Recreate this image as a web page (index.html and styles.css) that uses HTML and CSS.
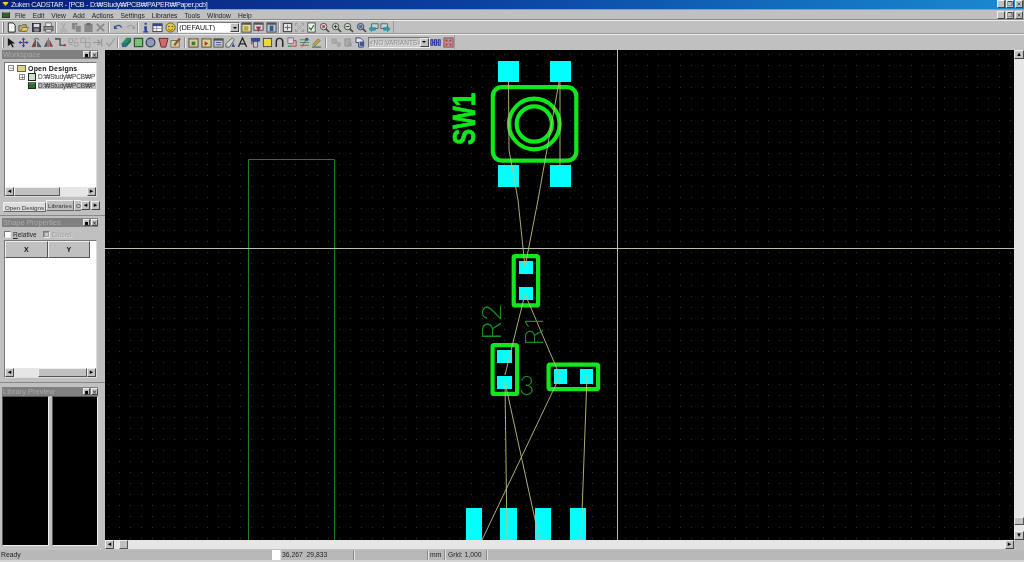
FILE: index.html
```html
<!DOCTYPE html>
<html lang="en">
<head>
<meta charset="utf-8">
<title>Zuken CADSTAR</title>
<link rel="stylesheet" href="styles.css">
</head>
<body>
<svg class="defs" aria-hidden="true">
  <symbol id="i-new" viewBox="0 0 12 12"><path d="M2.5 1h5l2.500 2.500V11h-7.500z" fill="#fff" stroke="#000"/></symbol>
  <symbol id="i-open" viewBox="0 0 12 12"><path d="M1 4h3l1-1h4v7H1z" fill="#c8b040" stroke="#444"/><path d="M3 10l2-4h6.500l-2 4z" fill="#e8d060" stroke="#444" stroke-width=".7"/></symbol>
  <symbol id="i-save" viewBox="0 0 12 12"><rect x="1.500" y="1.500" width="9" height="9" fill="#303060" stroke="#000" stroke-width=".8"/><rect x="3" y="2" width="6" height="3.500" fill="#ddd"/><rect x="3.500" y="7" width="5" height="3.500" fill="#888"/></symbol>
  <symbol id="i-print" viewBox="0 0 12 12"><rect x="3" y="1" width="6" height="4" fill="#eee" stroke="#444" stroke-width=".8"/><rect x="1" y="5" width="10" height="4.500" fill="#888" stroke="#333" stroke-width=".8"/><rect x="3" y="8" width="6" height="3" fill="#ddd" stroke="#444" stroke-width=".7"/></symbol>
  <symbol id="i-cut" viewBox="0 0 12 12"><path d="M4 1l3 7M8 1L5 8" stroke="#a0a0a0" fill="none"/><circle cx="4" cy="9.500" r="1.500" fill="none" stroke="#a0a0a0"/><circle cx="8" cy="9.500" r="1.500" fill="none" stroke="#a0a0a0"/></symbol>
  <symbol id="i-copy" viewBox="0 0 12 12"><rect x="1" y="1" width="6" height="7" fill="#808080"/><rect x="5" y="4" width="6" height="7" fill="#808080" stroke="#c0c0c0" stroke-width=".6"/></symbol>
  <symbol id="i-paste" viewBox="0 0 12 12"><rect x="1.500" y="2" width="9" height="9" fill="#808080"/><rect x="4" y="1" width="4" height="2.500" fill="#5a5a5a"/></symbol>
  <symbol id="i-del" viewBox="0 0 12 12"><path d="M2 2l8 8M10 2l-8 8" stroke="#808080" stroke-width="1.800"/></symbol>
  <symbol id="i-undo" viewBox="0 0 12 12"><path d="M2.500 5.500c2-2.500 5.500-2.500 7 .5" fill="none" stroke="#1a3c9c" stroke-width="1.600"/><path d="M1 3.500v4h4z" fill="#1a3c9c"/></symbol>
  <symbol id="i-redo" viewBox="0 0 12 12"><path d="M9.500 5.500c-2-2.500-5.500-2.500-7 .5" fill="none" stroke="#9a9a9a" stroke-width="1.400"/><path d="M11 3.500v4H7z" fill="#9a9a9a"/></symbol>
  <symbol id="i-info" viewBox="0 0 12 12"><rect x="5" y="1" width="2.400" height="2" fill="#1030a0"/><path d="M4.500 4.500h3V10H9v1.500H3.500V10h1.500z" fill="#1030a0"/></symbol>
  <symbol id="i-win" viewBox="0 0 12 12"><rect x="1" y="2" width="10" height="8.500" fill="#fff" stroke="#222"/><rect x="1" y="2" width="10" height="2.500" fill="#223a80"/><path d="M1 7h10M5 4.500v6" stroke="#555" stroke-width=".6"/></symbol>
  <symbol id="i-smile" viewBox="0 0 12 12"><circle cx="6" cy="6" r="5" fill="#e8d020" stroke="#444"/><circle cx="4.200" cy="4.800" r=".8" fill="#333"/><circle cx="7.800" cy="4.800" r=".8" fill="#333"/><path d="M3.500 7.500c1.500 2 3.500 2 5 0" stroke="#a02020" fill="none"/></symbol>
  <symbol id="i-a1" viewBox="0 0 12 12"><rect x="1" y="1" width="10" height="10" fill="#e8e0a0" stroke="#333"/><rect x="1" y="1" width="10" height="2" fill="#444"/><rect x="3" y="4.500" width="5" height="5" fill="#c0a030"/></symbol>
  <symbol id="i-a2" viewBox="0 0 12 12"><rect x="1" y="1" width="10" height="8" fill="#ddd" stroke="#333"/><rect x="1" y="1" width="10" height="2" fill="#444"/><path d="M3 5h6L6 11z" fill="#b02040"/></symbol>
  <symbol id="i-a3" viewBox="0 0 12 12"><rect x="1" y="1" width="10" height="10" fill="#b8c8d8" stroke="#333"/><rect x="1" y="1" width="10" height="2" fill="#444"/><rect x="4" y="4" width="4" height="6" fill="#204890"/></symbol>
  <symbol id="i-fit" viewBox="0 0 12 12"><rect x="1.500" y="1.500" width="9" height="9" fill="#e8e8e8" stroke="#333" stroke-width="1.200"/><path d="M6 3v6M3 6h6" stroke="#555"/></symbol>
  <symbol id="i-gfit" viewBox="0 0 12 12"><path d="M1.500 4V1.500H4M8 1.500h2.500V4M10.500 8v2.500H8M4 10.500H1.500V8" stroke="#8c8c8c" fill="none"/><path d="M3 3l6 6M9 3L3 9" stroke="#a0a0a0"/></symbol>
  <symbol id="i-chk" viewBox="0 0 12 12"><rect x="2" y="1" width="8" height="10" fill="#fff" stroke="#333"/><path d="M3.500 6l2 2.500 3-5" stroke="#108030" stroke-width="1.500" fill="none"/></symbol>
  <symbol id="i-zr" viewBox="0 0 12 12"><circle cx="5" cy="5" r="3.500" fill="#e8e0e0" stroke="#333"/><rect x="3.500" y="3.500" width="3" height="3" fill="#c03030"/><path d="M7.500 7.500l3.500 3.500" stroke="#333" stroke-width="1.600"/></symbol>
  <symbol id="i-zp" viewBox="0 0 12 12"><circle cx="5" cy="5" r="3.500" fill="#d8e8d8" stroke="#333"/><path d="M3 5h4M5 3v4" stroke="#111"/><path d="M7.500 7.500l3.500 3.500" stroke="#333" stroke-width="1.600"/></symbol>
  <symbol id="i-zm" viewBox="0 0 12 12"><circle cx="5" cy="5" r="3.500" fill="#d8e8d8" stroke="#333"/><path d="M3 5h4" stroke="#111"/><path d="M7.500 7.500l3.500 3.500" stroke="#333" stroke-width="1.600"/></symbol>
  <symbol id="i-zb" viewBox="0 0 12 12"><circle cx="5" cy="5" r="3.500" fill="#88a8c8" stroke="#333"/><rect x="3.500" y="3.500" width="3" height="3" fill="#406080"/><path d="M7.500 7.500l3.500 3.500" stroke="#333" stroke-width="1.600"/></symbol>
  <symbol id="i-pl" viewBox="0 0 12 12"><rect x="4" y="2" width="7" height="5" fill="#c0d8d8" stroke="#333" stroke-width=".8"/><path d="M1 7.500l3-3v1.500h4v3H4v1.500z" fill="#10a0b0" stroke="#086070" stroke-width=".5"/></symbol>
  <symbol id="i-pr" viewBox="0 0 12 12"><rect x="1" y="2" width="7" height="5" fill="#c0d8d8" stroke="#333" stroke-width=".8"/><path d="M11 7.500l-3-3v1.500H4v3h4v1.500z" fill="#10a0b0" stroke="#086070" stroke-width=".5"/></symbol>
  <symbol id="i-arrow" viewBox="0 0 12 12"><path d="M2 1l8 6H6.500L8.500 11 7 11.500 5 7.500 2 10z" fill="#000"/></symbol>
  <symbol id="i-move" viewBox="0 0 12 12"><path d="M6 1v10M1 6h10" stroke="#1030b0" stroke-width="1.200"/><path d="M6 .5l2 2.500H4zM6 11.500L4 9h4zM.5 6L3 4v4zM11.500 6L9 8V4z" fill="#1030b0"/><circle cx="6" cy="6" r="1.500" fill="#c03030"/></symbol>
  <symbol id="i-rot" viewBox="0 0 12 12"><path d="M1 10.500L5 3v7.500z" fill="#a02020" stroke="#222" stroke-width=".5"/><path d="M11 10.500L7 5v5.500z" fill="#206090" stroke="#222" stroke-width=".5"/><path d="M3 3c2-2 4-2 6 0" fill="none" stroke="#222" stroke-width=".7"/></symbol>
  <symbol id="i-mir" viewBox="0 0 12 12"><path d="M1 10.500L5 2.500v8z" fill="#444"/><path d="M11 10.500L7 2.500v8z" fill="#a02030"/><path d="M6 1v10" stroke="#222" stroke-width=".5"/></symbol>
  <symbol id="i-bend" viewBox="0 0 12 12"><path d="M1 2h4.500v7H11" fill="none" stroke="#222" stroke-width="1.200"/><rect x="0" y="1" width="2" height="2" fill="#2050a0"/><rect x="10" y="8" width="2" height="2" fill="#a02020"/></symbol>
  <symbol id="i-g1" viewBox="0 0 12 12"><path d="M1 2h4v4H1zM7 6h4v4H7zM1 8h4M7 2h4" fill="none" stroke="#989898"/><path d="M5 4h2v4" stroke="#a8a8a8" fill="none"/></symbol>
  <symbol id="i-g2" viewBox="0 0 12 12"><path d="M1 1h5v5H1zM6 6h5v5H6z" fill="none" stroke="#989898"/><path d="M8 1h3v3" stroke="#a8a8a8" fill="none"/></symbol>
  <symbol id="i-g3" viewBox="0 0 12 12"><path d="M1 6h8M6 3l3 3-3 3M10.500 2v8" stroke="#8c8c8c" fill="none" stroke-width="1.200"/></symbol>
  <symbol id="i-g4" viewBox="0 0 12 12"><path d="M1.500 6.500l3 3.500 6-8" stroke="#9a9a9a" fill="none" stroke-width="1.600"/></symbol>
  <symbol id="i-via" viewBox="0 0 12 12"><path d="M1 7l5-6h5L6 9H1z" fill="#128a5a" stroke="#083" stroke-width=".5"/><path d="M1 7h5v4H1z" fill="#1a5a8a"/><path d="M6 7l5-6v4l-5 6z" fill="#0c6040"/></symbol>
  <symbol id="i-sq" viewBox="0 0 12 12"><rect x="1.500" y="1.500" width="9" height="9" fill="#70c070" stroke="#1a4a1a" stroke-width="1.300"/></symbol>
  <symbol id="i-ci" viewBox="0 0 12 12"><circle cx="6" cy="6" r="4.700" fill="#8898b8" stroke="#222a50" stroke-width="1.300"/></symbol>
  <symbol id="i-fun" viewBox="0 0 12 12"><path d="M1 1.500h10L8.500 11h-5z" fill="#d06060" stroke="#501010"/></symbol>
  <symbol id="i-edit" viewBox="0 0 12 12"><rect x="1" y="4" width="9" height="7" fill="#e8d890" stroke="#444" stroke-width=".8"/><path d="M4 8l6-7 1.500 1.500-6 7z" fill="#a04020" stroke="#333" stroke-width=".4"/></symbol>
  <symbol id="i-c1" viewBox="0 0 12 12"><rect x="1" y="2" width="10" height="9" fill="#d8d088" stroke="#333"/><rect x="3.500" y=".8" width="5" height="2" fill="#888"/><rect x="4" y="5" width="4" height="4" fill="#2f6a2f"/></symbol>
  <symbol id="i-c2" viewBox="0 0 12 12"><rect x="1" y="2" width="10" height="9" fill="#e0d080" stroke="#333"/><rect x="3.500" y=".8" width="5" height="2" fill="#888"/><path d="M4 4.500v5l4-2.500z" fill="#a02020"/></symbol>
  <symbol id="i-c3" viewBox="0 0 12 12"><rect x="1" y="2" width="10" height="9" fill="#d0d0c0" stroke="#333"/><rect x="1" y="2" width="10" height="2" fill="#444"/><path d="M3 6h6M3 8.500h6" stroke="#2040a0"/></symbol>
  <symbol id="i-c4" viewBox="0 0 12 12"><path d="M1 11V7l7-6 2 2-5 8z" fill="#d8d8c8" stroke="#333" stroke-width=".8"/><path d="M9 6l2 5H7z" fill="#2a4a80"/></symbol>
  <symbol id="i-c5" viewBox="0 0 12 12"><path d="M1.500 11L6 1l4.500 10M3.500 7.500h5" fill="none" stroke="#111" stroke-width="1.400"/></symbol>
  <symbol id="i-c6" viewBox="0 0 12 12"><rect x="1" y="1" width="10" height="4" fill="#203a90"/><rect x="4" y="5" width="4" height="6" fill="#c8c8d8" stroke="#223" stroke-width=".7"/><rect x="1" y="5" width="2" height="3" fill="#d03030"/></symbol>
  <symbol id="i-c7" viewBox="0 0 12 12"><rect x="1.500" y="1.500" width="9" height="9" fill="#f0e020" stroke="#333"/></symbol>
  <symbol id="i-c8" viewBox="0 0 12 12"><path d="M2.500 11V5a3.500 3.500 0 0 1 7 0v6" fill="none" stroke="#111" stroke-width="1.600"/></symbol>
  <symbol id="i-c9" viewBox="0 0 12 12"><rect x="1" y="1" width="6" height="6" fill="#d8d8e8" stroke="#444" stroke-width=".7"/><path d="M7 4h3v6H4" stroke="#b03030" fill="none"/><path d="M1 10h3" stroke="#208030" stroke-width="1.400"/></symbol>
  <symbol id="i-c10" viewBox="0 0 12 12"><path d="M1 3h10M1 6h10M1 9h10" stroke="#309050" stroke-width="1.200"/><path d="M3 11l6-10" stroke="#b03030"/><rect x="7" y="1" width="3" height="3" fill="#2040a0"/></symbol>
  <symbol id="i-c11" viewBox="0 0 12 12"><path d="M2 8l6-6 2 2-6 6z" fill="#c8a030" stroke="#444" stroke-width=".6"/><path d="M1 11h10" stroke="#208040" stroke-width="1.400"/></symbol>
  <symbol id="i-v1" viewBox="0 0 12 12"><path d="M1 2h5v5H1zM7 6h3v4H7z" fill="#a8a8a8" stroke="#909090" stroke-width=".6"/></symbol>
  <symbol id="i-v2" viewBox="0 0 12 12"><path d="M2 2h6v8H2z" fill="#a8a8a8" stroke="#8c8c8c"/><path d="M6 6l4 4M10 6l-4 4" stroke="#808080"/></symbol>
  <symbol id="i-v3" viewBox="0 0 12 12"><path d="M1 1h5l3 3v7H4V6H1z" fill="#e8e8f0" stroke="#222a60"/><rect x="5" y="5" width="5" height="5" fill="#2a4a90"/></symbol>
  <symbol id="i-v4" viewBox="0 0 12 12"><path d="M1 3v6h2V3zM5 3h2v6H5zM9 3h2v6H9z" fill="none" stroke="#1020a0" stroke-width="1.300"/><path d="M3 6h2M7 6h2" stroke="#1020a0"/></symbol>
  <symbol id="i-v5" viewBox="0 0 12 12"><rect x="1" y="1" width="10" height="10" fill="#d88080" stroke="#704040"/><path d="M3 9l6-6M3 3l6 6" stroke="#a02030" stroke-width="1.300"/><circle cx="6" cy="6" r="2" fill="#8090c0"/></symbol>
</svg>

<div class="app">
  <header class="titlebar">
    <span class="appicon"></span>
    <span class="titletext">Zuken CADSTAR - [PCB - D:₩Study₩PCB₩PAPER₩Paper.pcb]</span>
    <span class="winbtns">
      <span class="wbtn">_</span><span class="wbtn">❐</span><span class="wbtn">×</span>
    </span>
  </header>

  <nav class="menubar">
    <span class="docicon"></span>
    <span class="mi"><u>F</u>ile</span><span class="mi"><u>E</u>dit</span><span class="mi"><u>V</u>iew</span><span class="mi"><u>A</u>dd</span><span class="mi">A<u>c</u>tions</span><span class="mi"><u>S</u>ettings</span><span class="mi"><u>L</u>ibraries</span><span class="mi"><u>T</u>ools</span><span class="mi"><u>W</u>indow</span><span class="mi"><u>H</u>elp</span>
    <span class="winbtns">
      <span class="wbtn">_</span><span class="wbtn">❐</span><span class="wbtn">×</span>
    </span>
  </nav>

  <div class="toolrow row1">
    <div class="toolbar tb-a">
      <span class="grip"></span>
      <span class="tb"><svg><use href="#i-new"/></svg></span><span class="tb"><svg><use href="#i-open"/></svg></span><span class="tb"><svg><use href="#i-save"/></svg></span><span class="tb"><svg><use href="#i-print"/></svg></span>
      <span class="sep s3"></span>
      <span class="tb"><svg><use href="#i-cut"/></svg></span><span class="tb"><svg><use href="#i-copy"/></svg></span><span class="tb"><svg><use href="#i-paste"/></svg></span><span class="tb"><svg><use href="#i-del"/></svg></span>
      <span class="sep"></span>
      <span class="tb"><svg><use href="#i-undo"/></svg></span><span class="tb"><svg><use href="#i-redo"/></svg></span>
      <span class="sep s3"></span>
      <span class="tb"><svg><use href="#i-info"/></svg></span><span class="tb"><svg><use href="#i-win"/></svg></span><span class="tb"><svg><use href="#i-smile"/></svg></span>
      <span class="combo c-default"><span class="combotext">(DEFAULT)</span><span class="comboarrow"></span></span>
      <span class="tb"><svg><use href="#i-a1"/></svg></span><span class="tb"><svg><use href="#i-a2"/></svg></span><span class="tb"><svg><use href="#i-a3"/></svg></span>
      <span class="sep s4"></span>
      <span class="tb"><svg><use href="#i-fit"/></svg></span><span class="tb"><svg><use href="#i-gfit"/></svg></span><span class="tb"><svg><use href="#i-chk"/></svg></span><span class="tb"><svg><use href="#i-zr"/></svg></span><span class="tb"><svg><use href="#i-zp"/></svg></span><span class="tb"><svg><use href="#i-zm"/></svg></span><span class="tb"><svg><use href="#i-zb"/></svg></span><span class="tb"><svg><use href="#i-pl"/></svg></span><span class="tb"><svg><use href="#i-pr"/></svg></span>
    </div>
  </div>

  <div class="toolrow row2">
    <div class="toolbar tb-b">
      <span class="grip"></span>
      <span class="tb"><svg><use href="#i-arrow"/></svg></span><span class="tb"><svg><use href="#i-move"/></svg></span><span class="tb"><svg><use href="#i-rot"/></svg></span><span class="tb"><svg><use href="#i-mir"/></svg></span><span class="tb"><svg><use href="#i-bend"/></svg></span><span class="tb"><svg><use href="#i-g1"/></svg></span><span class="tb"><svg><use href="#i-g2"/></svg></span><span class="tb"><svg><use href="#i-g3"/></svg></span><span class="tb"><svg><use href="#i-g4"/></svg></span>
      <span class="sep s4"></span>
      <span class="tb"><svg><use href="#i-via"/></svg></span><span class="tb"><svg><use href="#i-sq"/></svg></span><span class="tb"><svg><use href="#i-ci"/></svg></span><span class="tb"><svg><use href="#i-fun"/></svg></span><span class="tb"><svg><use href="#i-edit"/></svg></span>
      <span class="sep s6"></span>
      <span class="tb"><svg><use href="#i-c1"/></svg></span><span class="tb"><svg><use href="#i-c2"/></svg></span><span class="tb"><svg><use href="#i-c3"/></svg></span><span class="tb"><svg><use href="#i-c4"/></svg></span><span class="tb"><svg><use href="#i-c5"/></svg></span><span class="tb"><svg><use href="#i-c6"/></svg></span><span class="tb"><svg><use href="#i-c7"/></svg></span><span class="tb"><svg><use href="#i-c8"/></svg></span><span class="tb"><svg><use href="#i-c9"/></svg></span><span class="tb"><svg><use href="#i-c10"/></svg></span><span class="tb"><svg><use href="#i-c11"/></svg></span>
      <span class="sep s7"></span>
      <span class="tb"><svg><use href="#i-v1"/></svg></span><span class="tb"><svg><use href="#i-v2"/></svg></span><span class="tb"><svg><use href="#i-v3"/></svg></span>
      <span class="combo c-variants"><span class="combotext dim">&lt;NO VARIANTS&gt;</span><span class="comboarrow"></span></span>
      <span class="tb"><svg><use href="#i-v4"/></svg></span><span class="tb"><svg><use href="#i-v5"/></svg></span>
    </div>
  </div>

  <main class="main">
    <aside class="side">
      <section class="dock dock-ws">
        <div class="caption"><span>Workspace</span><span class="capbtns"><i>▪</i><i>×</i></span></div>
        <div class="treebox">
          <ul class="tree">
            <li class="root"><span class="expander">−</span><span class="folder"></span><b>Open Designs</b></li>
            <li class="lvl"><span class="expander">+</span><span class="fileicon"></span><span>D:₩Study₩PCB₩P</span></li>
            <li class="lvl sel"><span class="noexp"></span><span class="pcbicon"></span><span class="seltext">D:₩Study₩PCB₩P</span></li>
          </ul>
          <div class="hscroll small">
            <span class="sbtn">◂</span><span class="thumb t-ws"></span><span class="track"></span><span class="sbtn">▸</span>
          </div>
        </div>
        <div class="tabs">
          <span class="tab active">Open Designs</span><span class="tab t-lib">Libraries</span><span class="tab cut">O</span><span class="tabnav"><span class="sbtn">◂</span><span class="sbtn">▸</span></span>
        </div>
      </section>

      <section class="dock dock-shape">
        <div class="caption"><span>Shape Properties</span><span class="capbtns"><i>▪</i><i>×</i></span></div>
        <div class="checks">
          <span class="cb"></span><span class="cblabel"><u>R</u>elative</span>
          <span class="cb checked"></span><span class="cblabel dimlabel">Closed</span>
        </div>
        <div class="gridbox">
          <div class="gridhead"><span class="gh">X</span><span class="gh">Y</span></div>
          <div class="gridbody"></div>
          <div class="hscroll small">
            <span class="sbtn">◂</span><span class="track"></span><span class="thumb t-grid"></span><span class="sbtn">▸</span>
          </div>
        </div>
      </section>

      <section class="dock dock-lib">
        <div class="caption"><span>Library Preview</span><span class="capbtns"><i>▪</i><i>×</i></span></div>
        <div class="previews"><div class="pv"></div><div class="pv"></div></div>
      </section>
    </aside>

    <div class="workarea">
      <div class="viewrow">
        <svg class="board" viewBox="105 50 909 490" preserveAspectRatio="none" role="img" aria-label="PCB layout">
          <defs>
            <pattern id="dots" x="108" y="54" width="11" height="11" patternUnits="userSpaceOnUse">
              <rect x="0" y="0" width="1" height="1" fill="#343434"/>
            </pattern>
          </defs>
          <rect x="105" y="50" width="909" height="490" fill="#000"/>
          <rect x="105" y="50" width="909" height="490" fill="url(#dots)"/>

          <path class="outline" d="M248.500 541V159.500H334.500V541"/>
          <path class="cross" d="M105 248.500H1014M617.500 50V540"/>

          <g class="pad">
            <rect x="498" y="61" width="21" height="21"/><rect x="550" y="61" width="21" height="21"/>
            <rect x="498" y="165" width="21" height="22"/><rect x="550" y="165" width="21" height="22"/>
            <rect x="519" y="261" width="14" height="13"/><rect x="519" y="287" width="14" height="13"/>
            <rect x="497" y="350" width="15" height="13"/><rect x="497" y="376" width="15" height="13"/>
            <rect x="554" y="369" width="13" height="15"/><rect x="580" y="369" width="13" height="15"/>
            <rect x="466" y="508" width="16" height="32"/><rect x="500" y="508" width="17" height="32"/>
            <rect x="535" y="508" width="16" height="32"/><rect x="570" y="508" width="16" height="32"/>
          </g>

          <g class="silk">
            <rect x="492.800" y="87.100" width="83.500" height="73.500" rx="9"/>
            <circle cx="534.300" cy="124" r="25.300"/>
            <circle cx="534.300" cy="124" r="17.600"/>
            <rect x="513.700" y="256.200" width="24.400" height="49.200" rx="1.500"/>
            <rect x="492.600" y="345.200" width="24.500" height="48.700" rx="1.500"/>
            <rect x="548.600" y="364.600" width="49.500" height="24.500" rx="1.500"/>
          </g>

          <g class="rats">
            <path d="M508.500 82L509 150L518 200L525 267"/>
            <path d="M560 82V165"/>
            <path d="M559 82L538 200L525 267"/>
            <path d="M525 294L505 375"/>
            <path d="M525 294L560 376"/>
            <path d="M560 376L482 540"/>
            <path d="M505 382L507 540"/>
            <path d="M505 382L539.500 540"/>
            <path d="M587 376L581 540"/>
          </g>

          <text class="swlabel" transform="translate(475 145) rotate(-90)" textLength="52" lengthAdjust="spacingAndGlyphs">SW1</text>
          <text class="reflabel" transform="translate(501 340) rotate(-90)" textLength="37" lengthAdjust="spacingAndGlyphs">R2</text>
          <text class="reflabel r1" transform="translate(543 346) rotate(-90)" textLength="28" lengthAdjust="spacingAndGlyphs">R1</text>
          <text class="reflabel" x="519" y="395">3</text>
        </svg>
        <div class="vscroll">
          <span class="sbtn">▴</span><span class="vtrack"></span><span class="vthumb"></span><span class="vtrack2"></span><span class="sbtn">▾</span>
        </div>
      </div>
      <div class="hrow">
        <div class="hscroll big">
          <span class="sbtn">◂</span><span class="track t-left"></span><span class="thumb t-main"></span><span class="track"></span><span class="sbtn">▸</span>
        </div>
        <span class="corner"></span>
      </div>
    </div>
  </main>

  <footer class="status">
    <span class="st st-ready">Ready</span>
    <span class="st-white"></span>
    <span class="st st-coord">36,267&nbsp; 29,833</span>
    <span class="st st-empty"></span>
    <span class="st st-unit">mm</span>
    <span class="st st-grid">Grid: 1,000</span>
    <span class="st st-rest"></span>
  </footer>
</div>
</body>
</html>
```

FILE: styles.css
```css
* { box-sizing: border-box; }
html, body { margin: 0; padding: 0; background: #c0c0c0; overflow: hidden; }
.defs { position: absolute; width: 0; height: 0; }

.app {
  width: 1024px;
  height: 562px;
  display: flex;
  flex-direction: column;
  background: #c0c0c0;
  font: 7px "Liberation Sans", "Noto Sans CJK KR", Arial, sans-serif;
  color: #111;
  overflow: hidden;
  filter: blur(0.4px);
}

/* Title bar */
.titlebar {
  height: 10px;
  flex: none;
  display: flex;
  align-items: center;
  padding: 0 1px 1px 2px;
  background: linear-gradient(90deg, #0a1f78 0%, #0a3fa0 45%, #1478c4 85%, #1c8ad0 100%);
  border-bottom: 1px solid #7fa0d0;
  color: #e8e8f4;
  font-size: 7.2px;
}
.appicon {
  width: 7px; height: 5px; margin-right: 2px;
  background: linear-gradient(#f0d020, #f0d020 40%, #505010);
  clip-path: polygon(0 0, 100% 0, 50% 100%);
}
.titletext { letter-spacing: -0.28px; white-space: nowrap; }
.winbtns { margin-left: auto; display: flex; gap: 1px; }
.wbtn {
  width: 8px; height: 8px;
  background: #c0c0c0;
  border: 1px solid;
  border-color: #eee #444 #444 #eee;
  font: 6px/6px "DejaVu Sans", sans-serif;
  text-align: center;
  color: #111;
  overflow: hidden;
}

/* Menu bar */
.menubar {
  height: 10px;
  flex: none;
  display: flex;
  align-items: center;
  padding: 0 1px 0 2px;
  font-size: 6.700px;
}
.docicon {
  width: 8px; height: 6px;
  margin-right: 5px;
  background: #2a6a20;
  border: 1px solid #333;
  border-top-color: #888;
}
.mi { margin-right: 7px; white-space: nowrap; color: #222; }
.mi u { text-decoration-thickness: 1px; }

/* Tool rows */
.toolrow { flex: none; display: flex; }
.row1 { height: 14px; border-top: 1px solid #eee; box-shadow: 0 -1px 0 #8c8c8c; }
.row2 { height: 16px; border-top: 1px solid #eee; box-shadow: 0 -1px 0 #999; }
.toolbar {
  height: 14px;
  display: flex;
  align-items: center;
  padding-left: 2px;
  border-right: 1px solid #999;
}
.tb-a { width: 394px; height: 13px; }
.tb-b { width: 455px; }
.grip {
  width: 2px; height: 11px;
  margin-right: 1.500px;
  border-left: 1px solid #f2f2f2;
  border-right: 1px solid #777;
}
.tb { width: 12.300px; height: 12px; flex: none; display: flex; align-items: center; justify-content: center; }
.tb svg { width: 11px; height: 11px; display: block; opacity: .88; }
.sep {
  width: 5px; height: 11px; flex: none;
  background: linear-gradient(90deg, #8c8c8c 50%, #eee 50%) center / 2px 100% no-repeat;
}
.s3 { width: 3px; }
.s4 { width: 4px; }
.s6 { width: 6px; }
.s7 { width: 7px; }
.combo {
  height: 11px;
  flex: none;
  display: flex;
  align-items: center;
  background: #fff;
  border: 1px solid;
  border-color: #777 #eee #eee #777;
  padding-left: 1px;
}
.c-default { width: 63px; margin-left: 1px; }
.c-variants { width: 62px; margin-left: 1px; background: #c4c4c4; }
.combotext { flex: 1; white-space: nowrap; overflow: hidden; }
.combotext.dim { color: #8a8a8a; text-shadow: 1px 1px 0 #eee; font-size: 6.5px; }
.comboarrow {
  width: 9px; height: 9px;
  flex: none;
  background: #c0c0c0;
  border: 1px solid;
  border-color: #eee #444 #444 #eee;
  position: relative;
}
.comboarrow::after {
  content: "";
  position: absolute;
  left: 1.500px; top: 2.500px;
  border: 2px solid transparent;
  border-top: 2px solid #000;
  border-bottom: 0;
}

/* Main */
.main { flex: 1; display: flex; min-height: 0; }
.side { width: 105px; flex: none; display: flex; flex-direction: column; }
.dock { border-bottom: 1px solid #888; padding: 0 2px; display: flex; flex-direction: column; }
.dock-ws { height: 166px; }
.dock-shape { height: 167px; padding-top: 2px; }
.dock-lib { flex: 1; padding-top: 4px; border-bottom: 0; }
.caption {
  height: 9px;
  flex: none;
  background: #808080;
  color: #aaa;
  display: flex;
  align-items: center;
  padding-left: 1px;
  margin-right: 5px;
  font-size: 7.5px;
}
.capbtns { margin-left: auto; display: flex; gap: 1px; }
.capbtns i {
  width: 7px; height: 7px;
  background: #c0c0c0;
  border: 1px solid;
  border-color: #eee #444 #444 #eee;
  font: normal 6px/5px "DejaVu Sans", sans-serif;
  color: #000;
  text-align: center;
  overflow: hidden;
}
.treebox {
  height: 135px;
  margin: 3px 6px 0 2px;
  background: #fff;
  border: 1px solid;
  border-color: #777 #ddd #ddd #777;
  display: flex;
  flex-direction: column;
}
.tree { list-style: none; margin: 0; padding: 1px 0 0 3px; flex: 1; font-size: 6.500px; letter-spacing: -.15px; color: #333; overflow: hidden; }
.tree li { height: 8.500px; display: flex; align-items: center; white-space: nowrap; }
.tree b { color: #111; font-weight: 700; letter-spacing: .2px; font-size: 7px; }
.lvl { padding-left: 11px; }
.expander {
  width: 6px; height: 6px; flex: none;
  border: 1px solid #888;
  font: 6px/4px "DejaVu Sans", sans-serif;
  text-align: center;
  margin-right: 3px;
  overflow: hidden;
}
.noexp { width: 9px; flex: none; }
.folder { width: 9px; height: 7px; background: #e0d080; border: 1px solid #665; margin-right: 2px; flex: none; }
.fileicon { width: 8px; height: 8px; background: #cfe0cf; border: 1px solid #222; margin-right: 2px; flex: none; }
.pcbicon { width: 8px; height: 7px; background: #1f7a1f; border: 1px solid #222; border-top: 2px solid #666; margin-right: 2px; flex: none; }
.seltext { background: #c0c0c0; flex: 1; }

.hscroll { display: flex; align-items: stretch; flex: none; }
.hscroll.small { height: 9px; }
.hscroll.big { height: 9px; flex: 1; }
.sbtn {
  width: 9px; height: 9px; flex: none;
  background: #c0c0c0;
  border: 1px solid;
  border-color: #eee #444 #444 #eee;
  font: 7px/6px "DejaVu Sans", sans-serif;
  text-align: center;
  color: #000;
  overflow: hidden;
}
.track { flex: 1; background: #e6e6e6; }
.thumb { flex: none; background: #c0c0c0; border: 1px solid; border-color: #eee #555 #555 #eee; }
.t-ws { width: 46px; }
.t-grid { width: 49px; }
.t-main { width: 9px; }
.t-left { flex: none; width: 5px; }

.tabs { display: flex; align-items: flex-end; height: 14px; padding-left: 1px; margin-right: 4px; font-size: 6.200px; color: #333; }
.tab {
  height: 11px; padding: 0 1px;
  border: 1px solid #666;
  border-top-color: #eee;
  border-left-color: #eee;
  white-space: nowrap;
  line-height: 9px;
  flex: none;
}
.tab.active { background: #ddd; height: 10px; width: 43px; margin-bottom: -1px; padding: 0; text-align: center; }
.t-lib { width: 28px; }
.tab.cut { width: 7px; border-right: 0; }
.tabnav { display: flex; margin-left: auto; gap: 1px; padding-bottom: 1px; }

.checks { height: 12px; flex: none; display: flex; align-items: center; padding-left: 2px; margin-top: 1px; }
.cb { width: 7px; height: 7px; background: #fff; border: 1px solid; border-color: #777 #eee #eee #777; margin-right: 2px; flex: none; }
.cb.checked { background: #c8c8c8; box-shadow: inset 0 0 0 1px #999; }
.cblabel { margin-right: 6px; color: #222; font-size: 6.500px; white-space: nowrap; }
.dimlabel { color: #a0a0a0; text-shadow: 1px 1px 0 #ddd; }

.gridbox {
  height: 138px;
  margin: 0 6px 0 2px;
  background: #fff;
  border: 1px solid;
  border-color: #777 #ddd #ddd #777;
  display: flex;
  flex-direction: column;
}
.gridhead { display: flex; height: 17px; flex: none; width: 85px; }
.gh {
  flex: 1;
  background: #c0c0c0;
  border: 1px solid;
  border-color: #eee #555 #555 #eee;
  text-align: center;
  line-height: 15px;
  font-weight: 700;
  font-size: 7px;
}
.gridbody { flex: 1; }

.previews { flex: 1; display: flex; gap: 3px; margin: 0 5px 0 0; padding-bottom: 4px; }
.pv { flex: 1; background: #000; border: 1px solid; border-color: #555 #eee #eee #555; }

/* Canvas */
.workarea { flex: 1; display: flex; flex-direction: column; min-width: 0; }
.viewrow { flex: 1; display: flex; min-height: 0; }
.board { width: 909px; height: 490px; display: block; flex: none; }
.outline { fill: none; stroke: #1f7f25; stroke-width: 1; }
.cross { fill: none; stroke: #b8c0b0; stroke-width: 1; }
.pad rect { fill: #00ffff; }
.silk rect, .silk circle { fill: none; stroke: #11e81c; stroke-width: 4.200; }
.rats path { fill: none; stroke: #c0c080; stroke-width: .9; }
.swlabel {
  font: 700 31px "Liberation Sans", Arial, sans-serif;
  fill: #11e81c;
  stroke: #11e81c;
  stroke-width: .8;
}
.reflabel {
  font: 200 26px Inter, "Liberation Sans", sans-serif;
  fill: #1c8a26;
}
.reflabel.r1 { font-size: 24px; }
.vscroll { width: 10px; flex: none; display: flex; flex-direction: column; background: #e6e6e6; }
.vscroll .sbtn { width: 10px; }
.vtrack { flex: 1; }
.vthumb { height: 8px; flex: none; background: #c0c0c0; border: 1px solid; border-color: #eee #555 #555 #eee; }
.vtrack2 { height: 6px; flex: none; }
.hrow { height: 10px; flex: none; display: flex; }
.corner { width: 10px; flex: none; }

/* Status bar */
.status {
  height: 12px;
  flex: none;
  display: flex;
  align-items: flex-start;
  font-size: 6.800px;
  color: #222;
  background: #c0c0c0;
  border-bottom: 2px solid #d4d4d4;
}
.st { height: 10px; line-height: 10px; padding-left: 1px; white-space: nowrap; background: #b8b8b8; border-right: 1px solid #888; border-left: 1px solid #e0e0e0; }
.st-ready { width: 272px; padding-left: 1px; border: 0; }
.st-white { width: 8px; height: 10px; background: #fff; flex: none; }
.st-coord { width: 74px; }
.st-empty { width: 74px; }
.st-unit { width: 17px; }
.st-grid { width: 42px; padding-left: 2px; }
.st-rest { flex: 1; border-right: 0; }
```
